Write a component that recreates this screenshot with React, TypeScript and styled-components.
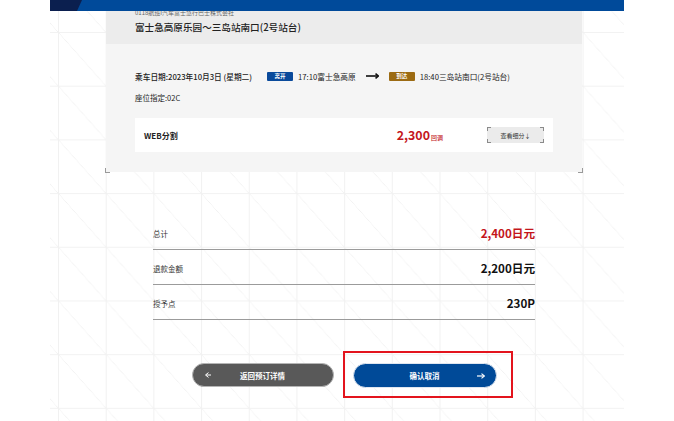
import styled, { createGlobalStyle } from 'styled-components';

const GlobalStyle = createGlobalStyle`
  html, body {
    margin: 0;
    padding: 0;
    background: #fff;
    overflow: hidden;
  }
  body {
    font-family: "Noto Sans CJK SC", "Noto Sans", sans-serif;
    color: #222;
  }
  * {
    box-sizing: border-box;
  }
`;

const summaryData = [
  { label: '总计', value: '2,400日元', highlight: true },
  { label: '退款金额', value: '2,200日元', highlight: false },
  { label: '授予点', value: '230P', highlight: false },
];

function Arrow({ dir, width, color, stroke }: { dir: 'left' | 'right'; width: number; color: string; stroke: number }) {
  const h = 6;
  const line = dir === 'right' ? `M0 3 H${width - 1}` : `M1 3 H${width}`;
  const head =
    dir === 'right'
      ? `M${width - 3.5} 0.6 L${width - 0.5} 3 L${width - 3.5} 5.4`
      : `M3.5 0.6 L0.5 3 L3.5 5.4`;
  return (
    <svg width={width} height={h} viewBox={`0 0 ${width} ${h}`} fill="none">
      <path d={line} stroke={color} strokeWidth={stroke} />
      <path d={head} stroke={color} strokeWidth={stroke} strokeLinejoin="miter" />
    </svg>
  );
}

export default function App() {
  return (
    <>
      <GlobalStyle />
      <Page>
        <TopBar />

        <Card>
          <CardHead>
            <Company>0118航班I汽车富士急行巴士株式会社</Company>
            <RouteTitle>富士急高原乐园～三岛站南口(2号站台)</RouteTitle>
          </CardHead>

          <CardBody>
            <DateRow>
              <DateText>乘车日期:2023年10月3日 (星期二)</DateText>
              <Badge $tone="depart">离开</Badge>
              <StopText>17:10富士急高原</StopText>
              <RouteArrow>
                <Arrow dir="right" width={13} color="#111" stroke={1.6} />
              </RouteArrow>
              <Badge $tone="arrive">到达</Badge>
              <StopText>18:40三岛站南口(2号站台)</StopText>
            </DateRow>

            <Seat>座位指定:02C</Seat>

            <FareBox>
              <FareName>WEB分割</FareName>
              <Price>
                2,300<PriceUnit>回调</PriceUnit>
              </Price>
              <DetailButton type="button">查看细分↓</DetailButton>
            </FareBox>
          </CardBody>
        </Card>

        <Summary>
          {summaryData.map((row) => (
            <SummaryRow key={row.label}>
              <SummaryLabel>{row.label}</SummaryLabel>
              <SummaryValue $highlight={row.highlight}>{row.value}</SummaryValue>
            </SummaryRow>
          ))}
        </Summary>

        <Actions>
          <PillButton type="button" $variant="back">
            <Arrow dir="left" width={6} color="#fff" stroke={1} />
            <span>返回预订详情</span>
            <span />
          </PillButton>
          <Highlight>
            <PillButton type="button" $variant="confirm">
              <span />
              <span>确认取消</span>
              <Arrow dir="right" width={8} color="#fff" stroke={1.2} />
            </PillButton>
          </Highlight>
        </Actions>
      </Page>
    </>
  );
}

/* Styled Components */

const Page = styled.main`
  position: relative;
  width: 574px;
  min-height: 100vh;
  margin-left: 50px;
  padding-left: 14px;
  display: flex;
  flex-direction: column;
  align-items: center;
  background-color: #fff;
  background-image:
    linear-gradient(to right, #f1f1f1 1px, transparent 1px),
    linear-gradient(to bottom, #f2f2f2 1px, transparent 1px),
    linear-gradient(to top right, transparent calc(50% - 0.5px), #f0f0f0 50%, transparent calc(50% + 0.5px));
  background-size: 47.7px 53.7px;
  background-position: 8px 32px;
`;

const TopBar = styled.div`
  position: absolute;
  top: 0;
  left: 0;
  right: 0;
  height: 11px;
  background: #004a9a;
  z-index: 5;

  &::before {
    content: '';
    position: absolute;
    left: 0;
    top: 0;
    width: 32px;
    height: 100%;
    background: #0b1f4f;
    clip-path: polygon(0 0, 100% 0, calc(100% - 5px) 100%, 0 100%);
  }
`;

const Card = styled.section`
  position: relative;
  width: 476px;
  background: #f5f5f5;

  &::before,
  &::after {
    content: '';
    position: absolute;
    bottom: -1px;
    width: 4px;
    height: 4px;
    border-bottom: 1px solid #9a9a9a;
  }
  &::before {
    left: -1px;
    border-left: 1px solid #9a9a9a;
  }
  &::after {
    right: -1px;
    border-right: 1px solid #9a9a9a;
  }
`;

const CardHead = styled.header`
  height: 44px;
  padding: 9px 29px 0;
  background: #ececec;
`;

const Company = styled.div`
  font-size: 6px;
  line-height: 8px;
  color: #666;
`;

const RouteTitle = styled.h2`
  margin: 4px 0 0;
  font-size: 9.6px;
  line-height: 12px;
  font-weight: 500;
  color: #222;
`;

const CardBody = styled.div`
  padding: 27px 29px 20px;
`;

const DateRow = styled.div`
  display: flex;
  align-items: center;
  height: 10px;
  font-size: 7.7px;
  font-weight: 500;
  color: #222;
`;

const DateText = styled.span`
  margin-right: 15px;
`;

const Badge = styled.span<{ $tone: 'depart' | 'arrive' }>`
  display: inline-flex;
  align-items: center;
  justify-content: center;
  width: 26px;
  height: 9px;
  border-radius: 1px;
  font-size: 5.5px;
  font-weight: 700;
  color: #fff;
  background: ${({ $tone }) => ($tone === 'depart' ? '#0a4a9b' : '#9c6b13')};
  margin-right: 5px;
`;

const StopText = styled.span`
  font-weight: 400;
  color: #222;
`;

const RouteArrow = styled.span`
  display: inline-flex;
  margin: 0 10px;
`;

const Seat = styled.div`
  margin-top: 12px;
  font-size: 7.5px;
  line-height: 9px;
  color: #222;
`;

const FareBox = styled.div`
  display: flex;
  align-items: center;
  height: 34px;
  margin-top: 16px;
  padding: 0 9px;
  background: #fff;
`;

const FareName = styled.span`
  font-size: 8px;
  font-weight: 700;
  color: #222;
`;

const Price = styled.span`
  margin-left: auto;
  font-size: 12.4px;
  font-weight: 700;
  color: #c4161c;
  display: flex;
  align-items: baseline;
`;

const PriceUnit = styled.span`
  font-size: 6px;
  font-weight: 500;
  margin-left: 1px;
`;

const DetailButton = styled.button`
  width: 57px;
  height: 16px;
  margin-left: 44px;
  padding: 0;
  border: none;
  font-family: inherit;
  font-size: 6px;
  color: #333;
  cursor: pointer;
  background:
    linear-gradient(#8a8a8a, #8a8a8a) left top / 4px 1px no-repeat,
    linear-gradient(#8a8a8a, #8a8a8a) left top / 1px 4px no-repeat,
    linear-gradient(#8a8a8a, #8a8a8a) right top / 4px 1px no-repeat,
    linear-gradient(#8a8a8a, #8a8a8a) right top / 1px 4px no-repeat,
    linear-gradient(#8a8a8a, #8a8a8a) left bottom / 4px 1px no-repeat,
    linear-gradient(#8a8a8a, #8a8a8a) left bottom / 1px 4px no-repeat,
    linear-gradient(#8a8a8a, #8a8a8a) right bottom / 4px 1px no-repeat,
    linear-gradient(#8a8a8a, #8a8a8a) right bottom / 1px 4px no-repeat,
    #ebebeb;
`;

const Summary = styled.section`
  width: 382px;
  margin-top: 43px;
`;

const SummaryRow = styled.div`
  display: flex;
  align-items: center;
  justify-content: space-between;
  height: 35px;
  padding-top: 2px;
  border-bottom: 1px solid #9b9b9b;
`;

const SummaryLabel = styled.span`
  font-size: 7.5px;
  color: #333;
`;

const SummaryValue = styled.span<{ $highlight: boolean }>`
  font-size: 11.6px;
  font-weight: 700;
  color: ${({ $highlight }) => ($highlight ? '#c4161c' : '#111')};
`;

const Actions = styled.div`
  display: flex;
  align-items: flex-start;
  gap: 19px;
  margin-top: 43px;
`;

const Highlight = styled.div`
  position: relative;

  &::after {
    content: '';
    position: absolute;
    left: -10px;
    right: -16px;
    top: -12px;
    bottom: -10px;
    border: 2px solid #e3141d;
    pointer-events: none;
  }
`;

const PillButton = styled.button<{ $variant: 'back' | 'confirm' }>`
  display: grid;
  grid-template-columns: 22px 1fr 22px;
  align-items: center;
  justify-items: center;
  width: ${({ $variant }) => ($variant === 'back' ? '142px' : '144px')};
  height: ${({ $variant }) => ($variant === 'back' ? '24px' : '25px')};
  padding: 0 4px;
  border-radius: 13px;
  border: 1px solid ${({ $variant }) => ($variant === 'back' ? '#b5b5b5' : '#dfe6f0')};
  background: ${({ $variant }) => ($variant === 'back' ? '#595959' : '#004a98')};
  color: #fff;
  font-family: inherit;
  font-size: 7.5px;
  font-weight: 700;
  cursor: pointer;
`;
